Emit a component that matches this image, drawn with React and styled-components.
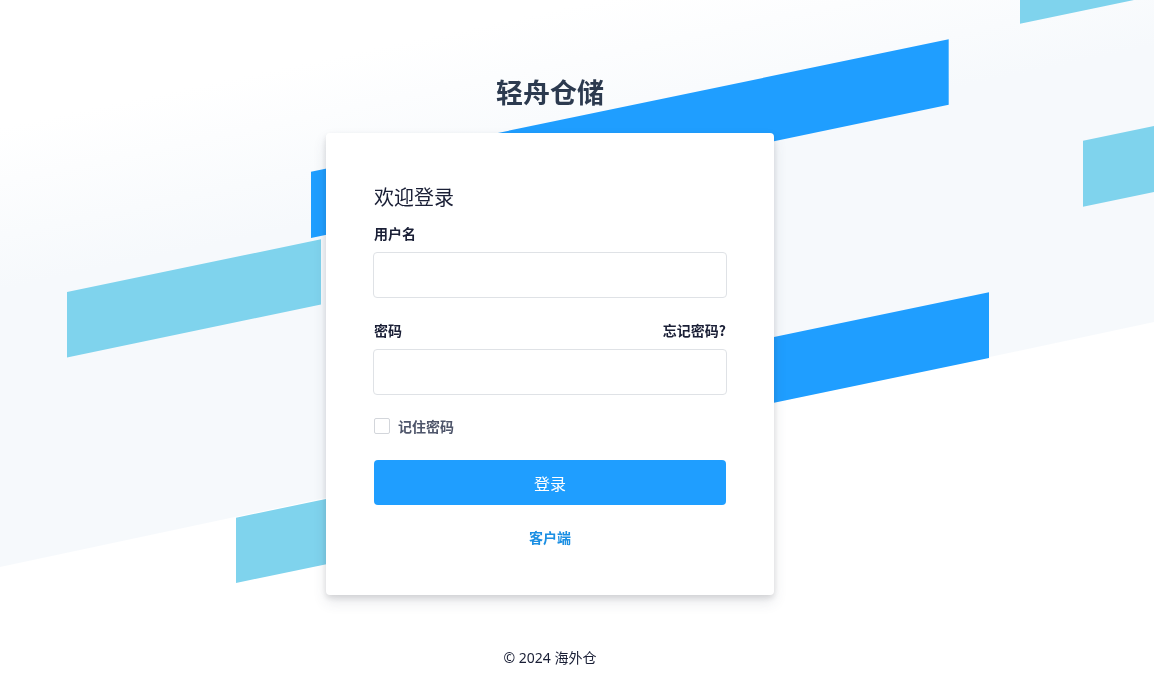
import React from "react";
import styled, { createGlobalStyle } from "styled-components";

const GlobalStyle = createGlobalStyle`
  * { box-sizing: border-box; }
  html, body { margin: 0; padding: 0; background: #ffffff; }
  body {
    font-family: "Noto Sans", "Noto Sans CJK SC", sans-serif;
    color: #1a1f36;
  }
`;

const Backdrop = styled.svg`
  position: fixed;
  inset: 0;
  width: 100%;
  height: 100%;
  z-index: 0;
  display: block;
`;

const Page = styled.div`
  position: relative;
  z-index: 1;
  width: 1100px;
  min-height: 688px;
  display: flex;
  flex-direction: column;
  align-items: center;
  padding-top: 74px;
`;

const Brand = styled.h1`
  margin: 0 0 23px;
  font-family: "Noto Sans CJK SC", sans-serif;
  font-size: 27px;
  line-height: 36px;
  font-weight: 700;
  color: #2c3a4f;
`;

const Card = styled.form`
  width: 448px;
  background: #ffffff;
  border-radius: 4px;
  padding: 50px 48px 48px;
  box-shadow: rgba(60, 66, 87, 0.12) 0px 7px 14px 0px,
    rgba(0, 0, 0, 0.12) 0px 3px 6px 0px;
  display: flex;
  flex-direction: column;
`;

const Heading = styled.h2`
  margin: 0 0 12px;
  font-family: "Noto Sans CJK SC", sans-serif;
  font-size: 20px;
  line-height: 28px;
  font-weight: 400;
  color: #1a1f36;
`;

const Field = styled.div`
  display: flex;
  flex-direction: column;
  gap: 9px;
  margin-bottom: ${(p) => p.$gap || 0}px;
`;

const LabelRow = styled.div`
  display: flex;
  justify-content: space-between;
  align-items: center;
  height: 20px;
`;

const Label = styled.label`
  font-family: "Noto Sans CJK SC", sans-serif;
  font-size: 14px;
  line-height: 20px;
  font-weight: 700;
  color: #1a1f36;
`;

const ForgotLink = styled.a`
  font-family: "Noto Sans CJK SC", sans-serif;
  font-size: 14px;
  line-height: 20px;
  font-weight: 700;
  color: #1a1f36;
  text-decoration: none;
`;

const Input = styled.input`
  width: calc(100% + 2px);
  margin-left: -1px;
  height: 46px;
  border: 1px solid #dfe2e6;
  border-radius: 4px;
  padding: 8px 16px;
  font-size: 16px;
  background: #ffffff;
  outline: none;
`;

const CheckRow = styled.label`
  display: flex;
  align-items: center;
  gap: 8px;
  height: 20px;
  margin-bottom: 24px;
  font-family: "Noto Sans CJK SC", sans-serif;
  font-size: 14px;
  font-weight: 700;
  color: #4f566b;
`;

const Box = styled.span`
  width: 16px;
  height: 16px;
  border: 1px solid #d3d6db;
  border-radius: 2px;
  background: #ffffff;
`;

const Submit = styled.button`
  height: 45px;
  width: 100%;
  border: none;
  border-radius: 4px;
  background: #1f9eff;
  color: #ffffff;
  font-family: "Noto Sans CJK SC", sans-serif;
  font-size: 16px;
  font-weight: 400;
  margin-bottom: 22px;
  cursor: pointer;
`;

const ClientLink = styled.a`
  align-self: center;
  font-family: "Noto Sans CJK SC", sans-serif;
  font-size: 14px;
  line-height: 20px;
  font-weight: 700;
  color: #1b8fe3;
  text-decoration: none;
`;

const Footer = styled.footer`
  margin-top: 53px;
  font-size: 14px;
  line-height: 20px;
  color: #1a1f36;
`;

function Background() {
  return (
    <Backdrop viewBox="0 0 1154 688" preserveAspectRatio="none" aria-hidden="true">
      <defs>
        <linearGradient id="band" gradientUnits="userSpaceOnUse" x1="488" y1="24" x2="521" y2="180">
          <stop offset="0" stopColor="#ffffff" />
          <stop offset="1" stopColor="#f6f9fc" />
        </linearGradient>
      </defs>
      <polygon points="-10,-10 1164,-10 1164,320 -10,569" fill="url(#band)" />
      <polygon points="1020,-42 1160,-71.1 1160,-5.4 1020,23.7" fill="#7fd3ed" />
      <polygon points="311,171.7 948.7,39.3 948.7,104.7 311,238" fill="#1f9eff" />
      <polygon points="1083,140.7 1160,124.7 1160,190.7 1083,206.7" fill="#7fd3ed" />
      <polygon points="67,292 321,239.2 321,304.6 67,357.4" fill="#7fd3ed" />
      <polygon points="600,373.2 989,292.3 989,358 600,439" fill="#1f9eff" />
      <polygon points="236,517.7 500,462.8 500,528.2 236,583" fill="#7fd3ed" />
    </Backdrop>
  );
}

export default function App() {
  return (
    <>
      <GlobalStyle />
      <Background />
      <Page>
        <Brand>轻舟仓储</Brand>
        <Card onSubmit={(e) => e.preventDefault()}>
          <Heading>欢迎登录</Heading>
          <Field $gap={22}>
            <LabelRow>
              <Label htmlFor="username">用户名</Label>
            </LabelRow>
            <Input id="username" type="text" />
          </Field>
          <Field $gap={21}>
            <LabelRow>
              <Label htmlFor="password">密码</Label>
              <ForgotLink href="#">忘记密码?</ForgotLink>
            </LabelRow>
            <Input id="password" type="password" />
          </Field>
          <CheckRow>
            <Box />
            记住密码
          </CheckRow>
          <Submit type="submit">登录</Submit>
          <ClientLink href="#">客户端</ClientLink>
        </Card>
        <Footer>© 2024 海外仓</Footer>
      </Page>
    </>
  );
}
